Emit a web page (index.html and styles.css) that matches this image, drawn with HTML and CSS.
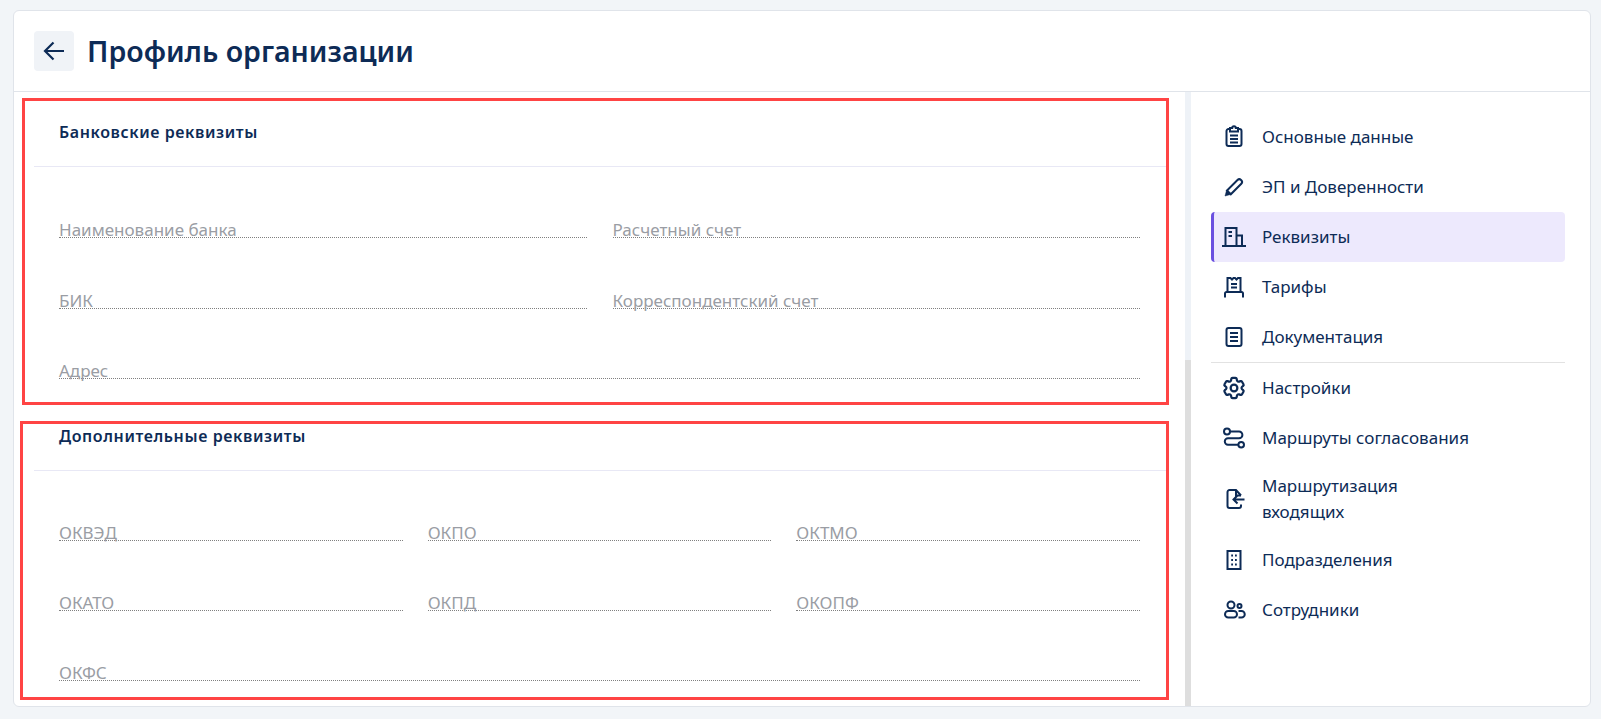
FILE: index.html
```html
<!DOCTYPE html>
<html lang="ru">
<head>
<meta charset="utf-8">
<title>Профиль организации</title>
<link rel="stylesheet" href="styles.css">
</head>
<body>
<div class="page">
  <div class="card">
    <header class="header">
      <button class="back" type="button" aria-label="Назад">
        <svg viewBox="0 0 24 24" class="back-icon"><path d="M22 12H3M11.500 3.500 3 12l8.500 8.500"/></svg>
      </button>
      <h1 class="title">Профиль организации</h1>
    </header>
    <div class="body">
      <main class="main">
        <section class="section section-bank">
          <h2 class="section-title">Банковские реквизиты</h2>
          <div class="fields fields-two">
            <div class="field"><span class="label">Наименование банка</span></div>
            <div class="field"><span class="label">Расчетный счет</span></div>
            <div class="field"><span class="label">БИК</span></div>
            <div class="field"><span class="label">Корреспондентский счет</span></div>
            <div class="field field-wide"><span class="label">Адрес</span></div>
          </div>
        </section>
        <section class="section section-extra">
          <h2 class="section-title">Дополнительные реквизиты</h2>
          <div class="fields fields-three">
            <div class="field"><span class="label">ОКВЭД</span></div>
            <div class="field"><span class="label">ОКПО</span></div>
            <div class="field"><span class="label">ОКТМО</span></div>
            <div class="field"><span class="label">ОКАТО</span></div>
            <div class="field"><span class="label">ОКПД</span></div>
            <div class="field"><span class="label">ОКОПФ</span></div>
            <div class="field field-wide"><span class="label">ОКФС</span></div>
          </div>
        </section>
      </main>
      <div class="scrollbar"><div class="thumb"></div></div>
      <nav class="nav">
        <a class="nav-item"><svg class="icon" viewBox="0 0 24 24"><path d="M8 4H6.500A2 2 0 0 0 4.500 6V19a2 2 0 0 0 2 2h11a2 2 0 0 0 2-2V6a2 2 0 0 0-2-2H16"/><path d="M8 3h2.200a1.800 1.800 0 0 1 3.600 0H16V6.500H8z"/><path d="M8 10.500h8M8 14h8M8 17.500h8"/></svg><span>Основные данные</span></a>
        <a class="nav-item"><svg class="icon" viewBox="0 0 24 24"><path d="M5 15.500 15.500 5a2.500 2.500 0 0 1 3.500 0l.3.300a2.500 2.500 0 0 1 0 3.500L8.800 19.300z"/><path d="M3 21 4.500 15.500 8.500 19.500z" class="solid"/></svg><span>ЭП и Доверенности</span></a>
        <a class="nav-item is-active"><svg class="icon" viewBox="0 0 24 24"><path d="M0 21h24M3.500 21V3h11v18M14.500 10.500H20V21"/><path d="M6.500 7h3.500M6.500 11h3.500"/></svg><span>Реквизиты</span></a>
        <a class="nav-item"><svg class="icon" viewBox="0 0 24 24"><path d="M5.500 17V3h3l1.500 1.500L11.500 3h1.500l1.500 1.500L16 3h2.500v14"/><path d="M9 9h6M9 12.500h6M3 22.500V18.500a1.500 1.500 0 0 1 1.500-1.500h15a1.500 1.500 0 0 1 1.500 1.500v4"/></svg><span>Тарифы</span></a>
        <a class="nav-item"><svg class="icon" viewBox="0 0 24 24"><rect x="4.500" y="3" width="15" height="18" rx="2"/><path d="M8 8h8M8 12h8M8 16h8"/></svg><span>Документация</span></a>
        <hr class="nav-divider">
        <a class="nav-item"><svg class="icon" viewBox="0 0 24 24"><g class="gear"><path d="M9.594 3.940c.09-.542.56-.94 1.110-.94h2.593c.55 0 1.020.398 1.110.94l.213 1.281c.063.374.313.686.645.87.074.04.147.083.22.127.325.196.72.257 1.075.124l1.217-.456a1.125 1.125 0 0 1 1.370.49l1.296 2.247a1.125 1.125 0 0 1-.26 1.431l-1.003.827c-.293.241-.438.613-.43.992a7.723 7.723 0 0 1 0 .255c-.008.378.137.75.43.991l1.004.827c.424.35.534.955.26 1.430l-1.298 2.247a1.125 1.125 0 0 1-1.369.491l-1.217-.456c-.355-.133-.75-.072-1.076.124a6.470 6.470 0 0 1-.22.128c-.331.183-.581.495-.644.869l-.213 1.281c-.09.543-.56.94-1.110.94h-2.594c-.55 0-1.019-.398-1.110-.94l-.213-1.281c-.062-.374-.312-.686-.644-.87a6.520 6.520 0 0 1-.22-.127c-.325-.196-.72-.257-1.076-.124l-1.217.456a1.125 1.125 0 0 1-1.369-.49l-1.297-2.247a1.125 1.125 0 0 1 .26-1.431l1.004-.827c.292-.24.437-.613.43-.991a6.932 6.932 0 0 1 0-.255c.007-.38-.138-.751-.43-.992l-1.004-.827a1.125 1.125 0 0 1-.26-1.430l1.297-2.247a1.125 1.125 0 0 1 1.370-.491l1.216.456c.356.133.751.072 1.076-.124.072-.044.146-.086.22-.128.332-.183.582-.495.644-.869l.214-1.280Z"/><circle cx="12" cy="12" r="3"/></g></svg><span>Настройки</span></a>
        <a class="nav-item"><svg class="icon" viewBox="0 0 24 24"><circle cx="5" cy="5.500" r="3"/><circle cx="19.200" cy="18.700" r="2.800"/><path d="M8 5.500h9a3.400 3.400 0 0 1 0 6.800H6a3.200 3.200 0 0 0 0 6.400h10.400"/></svg><span>Маршруты согласования</span></a>
        <a class="nav-item"><svg class="icon" viewBox="0 0 24 24"><path d="M19 8.500 14 3H7.500a2 2 0 0 0-2 2v14a2 2 0 0 0 2 2H17a2 2 0 0 0 2-2v-1.500"/><path d="M14 3v5.500h5M22.500 12.500H12M15.500 8.500l-4 4 4 4"/></svg><span>Маршрутизация<br>входящих</span></a>
        <a class="nav-item"><svg class="icon" viewBox="0 0 24 24"><rect x="5.500" y="3" width="13" height="18"/><path class="dots" d="M9.200 7.500h1.800M13 7.500h1.800M9.200 12h1.800M13 12h1.800M9.200 16.500h1.800M13 16.500h1.800"/></svg><span>Подразделения</span></a>
        <a class="nav-item"><svg class="icon" viewBox="0 0 24 24"><circle cx="9" cy="7" r="3.500"/><circle cx="17.500" cy="8" r="2"/><rect x="3" y="13" width="12" height="6.500" rx="3.250"/><path d="M16.500 13h3a3.200 3.200 0 0 1 0 6.500h-3"/></svg><span>Сотрудники</span></a>
      </nav>
    </div>
  </div>
</div>
</body>
</html>
```

FILE: styles.css
```css
* { box-sizing: border-box; }
html, body { margin: 0; height: 100%; }
body {
  font-family: "Noto Sans", "Open Sans", sans-serif;
  color: #0d2b56;
  background: #f2f5f8;
  overflow: hidden;
}
.page {
  height: 719px;
  padding: 10px 10px 12px 13px;
  display: flex;
}
.card {
  flex: 1;
  display: flex;
  flex-direction: column;
  background: #fff;
  border: 1px solid #e0e4ea;
  border-radius: 6px;
  overflow: hidden;
}
.header {
  height: 81px;
  flex: none;
  display: flex;
  align-items: center;
  gap: 13px;
  padding: 0 20px;
  border-bottom: 1px solid #e0e4ea;
}
.back {
  width: 40px;
  height: 40px;
  padding: 0;
  border: 0;
  border-radius: 4px;
  background: #f0f3f7;
  display: flex;
  align-items: center;
  justify-content: center;
}
.back-icon {
  width: 24px;
  height: 24px;
  fill: none;
  stroke: #0d2b56;
  stroke-width: 2.2;
}
.title {
  margin: 0;
  font-size: 28.5px;
  font-weight: 600;
  line-height: 40px;
}
.body {
  flex: 1;
  display: flex;
  min-height: 0;
}
.main {
  flex: 1;
  min-width: 0;
  padding: 6px 16px 0 0;
  display: flex;
  flex-direction: column;
  gap: 16px;
}
.section {
  border: 3px solid #ff4444;
  display: flex;
  flex-direction: column;
}
.section-bank { margin-left: 8px; height: 307px; }
.section-extra { margin-left: 6px; height: 279px; }
.section-title {
  margin: 0;
  font-size: 16px;
  font-weight: 600;
  line-height: 20px;
  letter-spacing: 0.6px;
  border-bottom: 1px solid #e8e8f5;
}
.section-bank .section-title { margin-left: 9px; padding: 21px 0 24px 25px; }
.section-extra .section-title { margin-left: 11px; padding: 2px 0 24px 25px; }
.fields {
  display: grid;
  padding-right: 26px;
}
.section-bank .fields {
  padding-left: 34px;
  column-gap: 26px;
  grid-template-columns: 1fr 1fr;
  grid-template-rows: 71px 71px 70px;
}
.section-extra .fields {
  padding-left: 36px;
  column-gap: 25px;
  grid-template-columns: 1fr 1fr 1fr;
  grid-auto-rows: 70px;
}
.field {
  display: flex;
  align-items: flex-end;
  border-bottom: 1px dotted #808080;
}
.field-wide { grid-column: 1 / -1; }
.label {
  font-size: 17px;
  line-height: 22px;
  margin-bottom: -4px;
  color: #9a9da4;
}
.scrollbar {
  flex: none;
  width: 6px;
  background: #eef2f7;
  display: flex;
  flex-direction: column;
}
.thumb {
  flex: 1;
  margin-top: 268px;
  background: #dedede;
}
.nav {
  flex: none;
  width: 399px;
  padding: 20px 25px 0 20px;
}
.nav-item {
  min-height: 50px;
  padding: 10px 0 10px 8px;
  display: flex;
  align-items: center;
  gap: 16px;
  font-size: 17px;
  line-height: 26px;
  border-left: 3px solid transparent;
  border-radius: 4px;
}
.is-active {
  background: #ede9fd;
  border-left-color: #6a50e0;
}
.nav-divider {
  margin: 0;
  border: 0;
  border-top: 1px solid #e2e2e2;
}
.icon {
  flex: none;
  width: 24px;
  height: 24px;
  fill: none;
  stroke: #0d2b56;
  stroke-width: 2;
}
.gear { transform: translate(12px, 12px) scale(1.12) translate(-12px, -12px); }
.solid { fill: #0d2b56; stroke-width: 0.5; }
.dots { stroke-width: 1.8; }
```
